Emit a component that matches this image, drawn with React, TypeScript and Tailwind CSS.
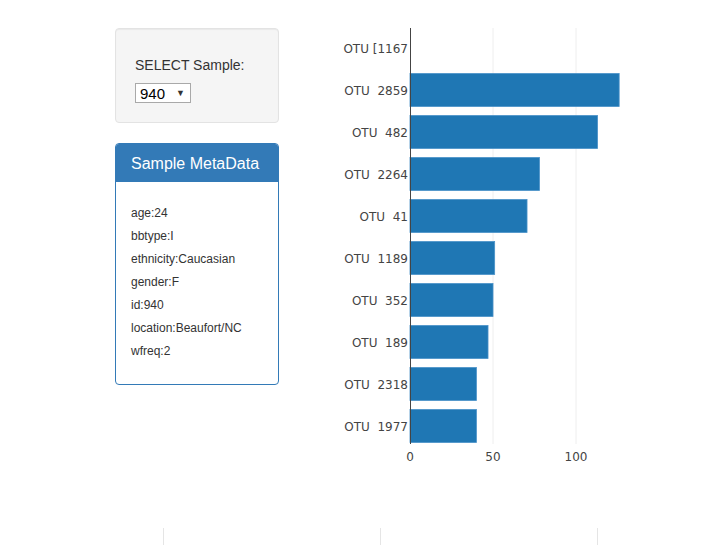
import React from 'react';

interface Otu {
    label: string;
    value: number;
}

const metadata = [
    'age:24',
    'bbtype:I',
    'ethnicity:Caucasian',
    'gender:F',
    'id:940',
    'location:Beaufort/NC',
    'wfreq:2',
];

const otus: Otu[] = [
    { label: 'OTU [1167', value: 0 },
    { label: 'OTU  2859', value: 126 },
    { label: 'OTU  482', value: 113 },
    { label: 'OTU  2264', value: 78 },
    { label: 'OTU  41', value: 70.5 },
    { label: 'OTU  1189', value: 51 },
    { label: 'OTU  352', value: 50 },
    { label: 'OTU  189', value: 47 },
    { label: 'OTU  2318', value: 40 },
    { label: 'OTU  1977', value: 40 },
];

// chart coords are relative to the svg origin (page x 300, y 0)
const X0 = 110;
const PX_PER_UNIT = 83 / 50;
const ROW = 42;
const FIRST = 48;
const TOP = 28;
const BOTTOM = 444;

function BarChart() {
    return (
        <svg width={400} height={480} className="block" style={{ fontFamily: '"DejaVu Sans", Verdana, sans-serif' }}>
            {[50, 100].map((t) => (
                <line key={t} x1={X0 + t * PX_PER_UNIT} x2={X0 + t * PX_PER_UNIT} y1={TOP} y2={BOTTOM} stroke="#eeeeee" strokeWidth={1} />
            ))}
            {otus.map((o, i) => {
                const cy = FIRST + ROW * i;
                return (
                    <g key={o.label}>
                        {o.value > 0 && (
                            <rect x={X0} y={cy - 16.5} width={o.value * PX_PER_UNIT} height={33} fill="#1f77b4" stroke="#4a92c9" strokeWidth={0.8} />
                        )}
                        <text x={X0 - 2} y={cy + 4.5} textAnchor="end" fontSize={12} fill="#444" style={{ whiteSpace: 'pre' }}>
                            {o.label}
                        </text>
                    </g>
                );
            })}
            <line x1={X0 + 0.5} x2={X0 + 0.5} y1={TOP} y2={BOTTOM} stroke="#444" strokeWidth={1} />
            {[0, 50, 100].map((t) => (
                <text key={t} x={X0 + t * PX_PER_UNIT} y={461} textAnchor="middle" fontSize={12} fill="#444">
                    {t}
                </text>
            ))}
        </svg>
    );
}

export default function App() {
    return (
        <div className="w-[719px] h-[545px] overflow-hidden bg-white text-[#333]" style={{ fontFamily: '"Liberation Sans", Arial, sans-serif' }}>
            <div className="flex items-start pl-[115px]">
                <div className="w-[164px] mt-[28px] flex flex-col gap-[20px]">
                    <div className="bg-[#f5f5f5] border border-[#e3e3e3] rounded-[4px] px-[19px] pt-[29px] pb-[19px] shadow-[inset_0_1px_1px_rgba(0,0,0,0.05)]">
                        <h5 className="text-[14px] leading-[15px] font-normal">SELECT Sample:</h5>
                        <div className="mt-[10px] w-[56px] h-[20px] bg-white border border-[#a9a9a9] flex items-center justify-between pl-[4px] pr-[5px]">
                            <span className="text-[15px] leading-none text-black">940</span>
                            <span className="text-[9px] leading-none text-[#333]">▼</span>
                        </div>
                    </div>
                    <div className="border border-[#337ab7] rounded-[4px] overflow-hidden bg-white">
                        <div className="bg-[#337ab7] px-[15px] pt-[11px] pb-[9px] text-white text-[16px] leading-[18px]">Sample MetaData</div>
                        <div className="px-[15px] pt-[25px] pb-[26px] flex flex-col gap-[10px]">
                            {metadata.map((m) => (
                                <h6 key={m} className="text-[12px] leading-[13px] font-normal">{m}</h6>
                            ))}
                        </div>
                    </div>
                </div>
                <div className="ml-[21px]">
                    <BarChart />
                </div>
            </div>
            <svg width={719} height={20} className="block mt-[48px]">
                {[163, 380, 597].map((x) => (
                    <line key={x} x1={x + 0.5} x2={x + 0.5} y1={0} y2={20} stroke="#e5e5e5" strokeWidth={1} />
                ))}
            </svg>
        </div>
    );
}
